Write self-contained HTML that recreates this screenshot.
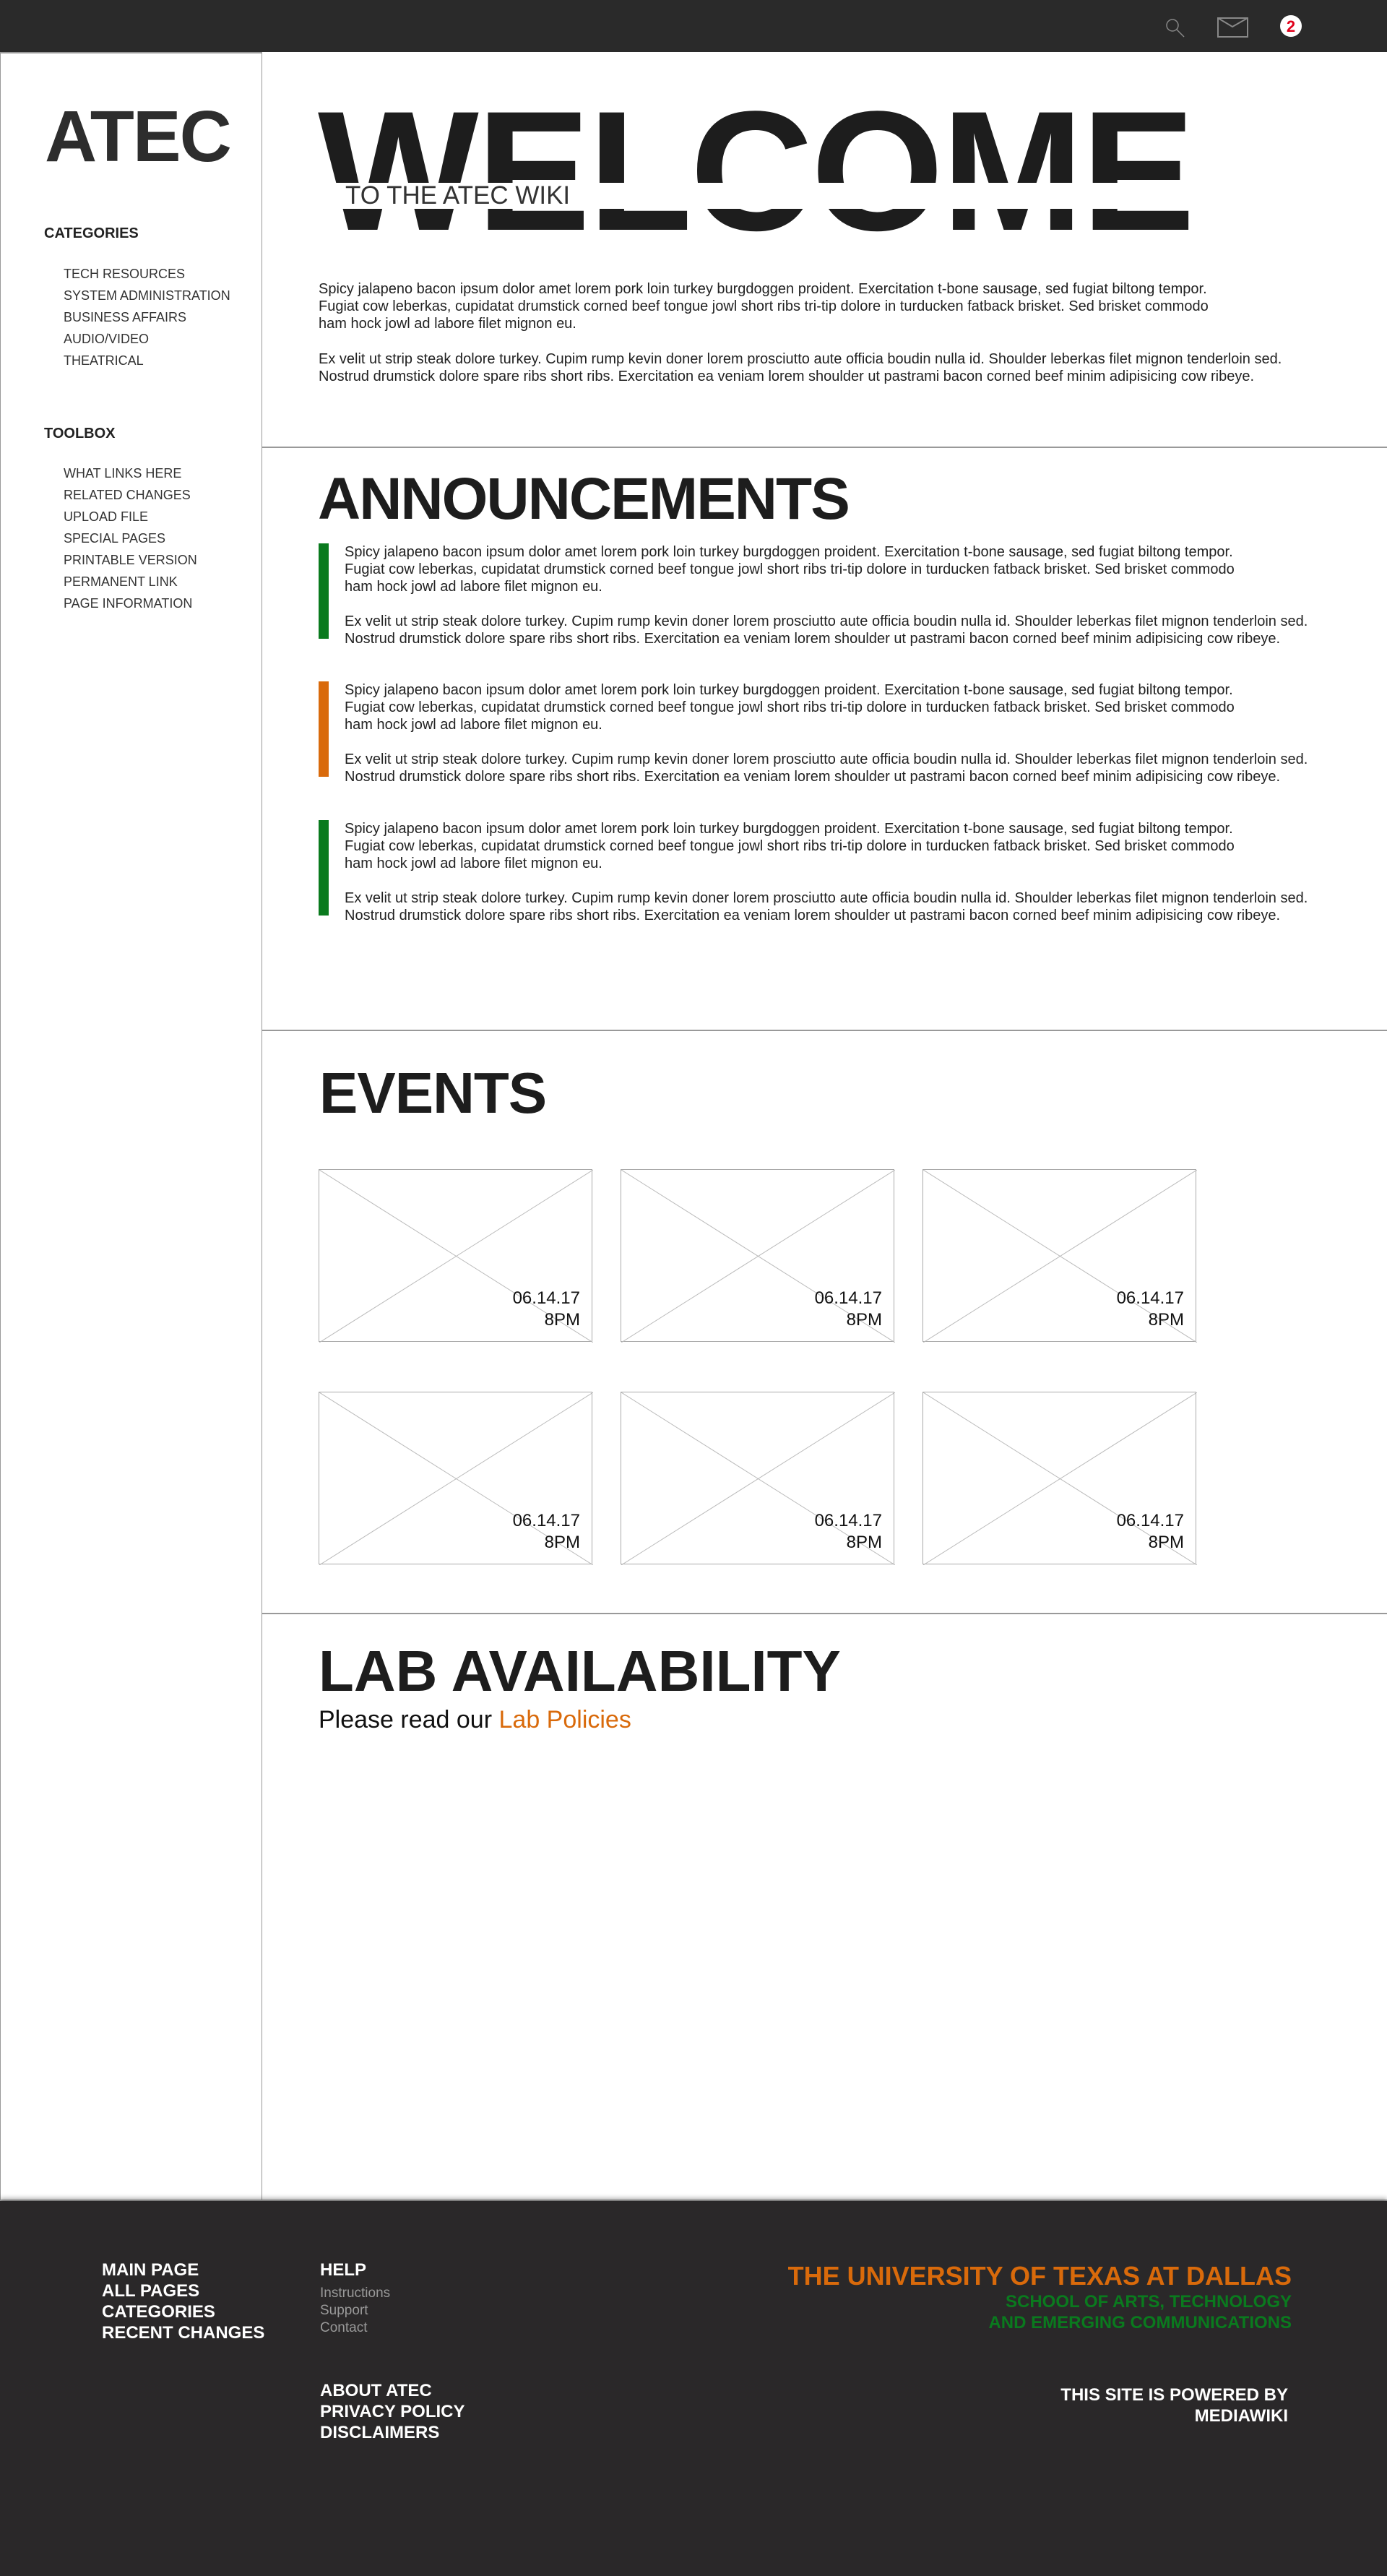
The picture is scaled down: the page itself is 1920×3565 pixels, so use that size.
<!DOCTYPE html>
<html><head><meta charset="utf-8"><style>
*{margin:0;padding:0;box-sizing:border-box}
body{width:1920px;height:3565px;position:relative;background:#fff;font-family:"Liberation Sans",Arial,sans-serif;color:#222;overflow:hidden}
.a{position:absolute;white-space:nowrap}
.hdr{left:0;top:0;width:1920px;height:72px;background:#2a2a2a}
.side{left:0;top:72px;width:363px;height:2973px;border:1px solid #999;border-top:2px solid #999}
.vl{left:362px;top:72px;width:1px;height:2973px;background:#999}
.hl{left:362px;width:1558px;height:2px;background:#999}
.cat{font-weight:bold;font-size:20px;color:#222;left:61px}
.li{font-size:18px;color:#333;left:88px;line-height:30px}
.p{font-size:20px;line-height:24px;color:#222}
.h{font-weight:bold;color:#1d1d1d;letter-spacing:-2px}
.bar{width:14px;height:132px;left:441px}
.box{width:379px;height:239px;border:1px solid #aaa}
.box svg{position:absolute;left:0;top:0}
.dt{position:absolute;right:16px;top:163px;text-align:right;font-size:24px;line-height:30px;color:#111}
.ft{left:0;top:3046px;width:1920px;height:519px;background:#2a2829;box-shadow:0 -4px 6px rgba(0,0,0,.3)}
.fb{font-weight:bold;color:#fff;font-size:24px;line-height:29px}
</style></head><body>
<div class="a hdr"></div>
<svg class="a" style="left:1600px;top:10px" width="220" height="52">
<circle cx="23" cy="25" r="8" fill="none" stroke="#888" stroke-width="1.5"/><line x1="29" y1="31" x2="39" y2="41" stroke="#888" stroke-width="1.5"/>
<rect x="86" y="15" width="41" height="26" fill="none" stroke="#888" stroke-width="2"/><polyline points="86,15 106,27 127,15" fill="none" stroke="#888" stroke-width="2"/>
<circle cx="187" cy="26" r="15" fill="#fff"/><text x="187" y="34" text-anchor="middle" font-family="Liberation Sans" font-weight="bold" font-size="22" fill="#e0001b">2</text>
</svg>
<div class="a side"></div>
<div class="a vl"></div>
<div class="a" style="left:62px;top:134px;font-size:100px;font-weight:bold;color:#2d2d2d;letter-spacing:-2px;line-height:110px">ATEC</div>
<div class="a cat" style="top:312px">CATEGORIES</div>
<div class="a li" style="top:364px">TECH RESOURCES<br>SYSTEM ADMINISTRATION<br>BUSINESS AFFAIRS<br>AUDIO/VIDEO<br>THEATRICAL</div>
<div class="a cat" style="top:589px">TOOLBOX</div>
<div class="a li" style="top:640px">WHAT LINKS HERE<br>RELATED CHANGES<br>UPLOAD FILE<br>SPECIAL PAGES<br>PRINTABLE VERSION<br>PERMANENT LINK<br>PAGE INFORMATION</div>

<div class="a h" style="left:440px;top:107px;font-size:236px;line-height:260px;letter-spacing:-3px;color:#1d1d1d">WELCOME</div>
<div class="a" style="left:443px;top:253px;width:1160px;height:36px;background:#fff"></div>
<div class="a" style="left:478px;top:251px;font-size:35px;color:#333;line-height:40px">TO THE ATEC WIKI</div>
<div class="a p" style="left:441px;top:388px">Spicy jalapeno bacon ipsum dolor amet lorem pork loin turkey burgdoggen proident. Exercitation t-bone sausage, sed fugiat biltong tempor.<br>Fugiat cow leberkas, cupidatat drumstick corned beef tongue jowl short ribs tri-tip dolore in turducken fatback brisket. Sed brisket commodo<br>ham hock jowl ad labore filet mignon eu.</div>
<div class="a p" style="left:441px;top:485px">Ex velit ut strip steak dolore turkey. Cupim rump kevin doner lorem prosciutto aute officia boudin nulla id. Shoulder leberkas filet mignon tenderloin sed.<br>Nostrud drumstick dolore spare ribs short ribs. Exercitation ea veniam lorem shoulder ut pastrami bacon corned beef minim adipisicing cow ribeye.</div>

<div class="a hl" style="top:618px"></div>
<div class="a h" style="left:440px;top:648px;font-size:82px;line-height:86px">ANNOUNCEMENTS</div>
<div class="a bar" style="top:752px;background:#0a7a1e"></div>
<div class="a bar" style="top:943px;background:#d96a0b"></div>
<div class="a bar" style="top:1135px;background:#0a7a1e"></div>
<div class="a p" style="left:477px;top:752px">Spicy jalapeno bacon ipsum dolor amet lorem pork loin turkey burgdoggen proident. Exercitation t-bone sausage, sed fugiat biltong tempor.<br>Fugiat cow leberkas, cupidatat drumstick corned beef tongue jowl short ribs tri-tip dolore in turducken fatback brisket. Sed brisket commodo<br>ham hock jowl ad labore filet mignon eu.</div>
<div class="a p" style="left:477px;top:848px">Ex velit ut strip steak dolore turkey. Cupim rump kevin doner lorem prosciutto aute officia boudin nulla id. Shoulder leberkas filet mignon tenderloin sed.<br>Nostrud drumstick dolore spare ribs short ribs. Exercitation ea veniam lorem shoulder ut pastrami bacon corned beef minim adipisicing cow ribeye.</div>
<div class="a p" style="left:477px;top:943px">Spicy jalapeno bacon ipsum dolor amet lorem pork loin turkey burgdoggen proident. Exercitation t-bone sausage, sed fugiat biltong tempor.<br>Fugiat cow leberkas, cupidatat drumstick corned beef tongue jowl short ribs tri-tip dolore in turducken fatback brisket. Sed brisket commodo<br>ham hock jowl ad labore filet mignon eu.</div>
<div class="a p" style="left:477px;top:1039px">Ex velit ut strip steak dolore turkey. Cupim rump kevin doner lorem prosciutto aute officia boudin nulla id. Shoulder leberkas filet mignon tenderloin sed.<br>Nostrud drumstick dolore spare ribs short ribs. Exercitation ea veniam lorem shoulder ut pastrami bacon corned beef minim adipisicing cow ribeye.</div>
<div class="a p" style="left:477px;top:1135px">Spicy jalapeno bacon ipsum dolor amet lorem pork loin turkey burgdoggen proident. Exercitation t-bone sausage, sed fugiat biltong tempor.<br>Fugiat cow leberkas, cupidatat drumstick corned beef tongue jowl short ribs tri-tip dolore in turducken fatback brisket. Sed brisket commodo<br>ham hock jowl ad labore filet mignon eu.</div>
<div class="a p" style="left:477px;top:1231px">Ex velit ut strip steak dolore turkey. Cupim rump kevin doner lorem prosciutto aute officia boudin nulla id. Shoulder leberkas filet mignon tenderloin sed.<br>Nostrud drumstick dolore spare ribs short ribs. Exercitation ea veniam lorem shoulder ut pastrami bacon corned beef minim adipisicing cow ribeye.</div>

<div class="a hl" style="top:1425px"></div>
<div class="a h" style="left:442px;top:1471px;font-size:80px;line-height:84px;letter-spacing:-1px">EVENTS</div>

<div class="a box" style="left:441px;top:1618px"><svg width="379" height="239"><line x1="0" y1="0" x2="379" y2="239" stroke="#bbb"/><line x1="379" y1="0" x2="0" y2="239" stroke="#bbb"/></svg><div class="dt">06.14.17<br>8PM</div></div>
<div class="a box" style="left:859px;top:1618px"><svg width="379" height="239"><line x1="0" y1="0" x2="379" y2="239" stroke="#bbb"/><line x1="379" y1="0" x2="0" y2="239" stroke="#bbb"/></svg><div class="dt">06.14.17<br>8PM</div></div>
<div class="a box" style="left:1277px;top:1618px"><svg width="379" height="239"><line x1="0" y1="0" x2="379" y2="239" stroke="#bbb"/><line x1="379" y1="0" x2="0" y2="239" stroke="#bbb"/></svg><div class="dt">06.14.17<br>8PM</div></div>
<div class="a box" style="left:441px;top:1926px"><svg width="379" height="239"><line x1="0" y1="0" x2="379" y2="239" stroke="#bbb"/><line x1="379" y1="0" x2="0" y2="239" stroke="#bbb"/></svg><div class="dt">06.14.17<br>8PM</div></div>
<div class="a box" style="left:859px;top:1926px"><svg width="379" height="239"><line x1="0" y1="0" x2="379" y2="239" stroke="#bbb"/><line x1="379" y1="0" x2="0" y2="239" stroke="#bbb"/></svg><div class="dt">06.14.17<br>8PM</div></div>
<div class="a box" style="left:1277px;top:1926px"><svg width="379" height="239"><line x1="0" y1="0" x2="379" y2="239" stroke="#bbb"/><line x1="379" y1="0" x2="0" y2="239" stroke="#bbb"/></svg><div class="dt">06.14.17<br>8PM</div></div>

<div class="a hl" style="top:2232px"></div>
<div class="a h" style="left:441px;top:2271px;font-size:80px;line-height:84px;letter-spacing:0">LAB AVAILABILITY</div>
<div class="a" style="left:441px;top:2360px;font-size:34px;line-height:40px;color:#111">Please read our <span style="color:#d96a0b">Lab Policies</span></div>
<div class="a" style="left:0;top:3044px;width:1920px;height:2px;background:#aaa"></div>

<div class="a ft"></div>
<div class="a fb" style="left:141px;top:3127px">MAIN PAGE<br>ALL PAGES<br>CATEGORIES<br>RECENT CHANGES</div>
<div class="a fb" style="left:443px;top:3127px">HELP</div>
<div class="a" style="left:443px;top:3162px;font-size:19px;line-height:24px;color:#999">Instructions<br>Support<br>Contact</div>
<div class="a fb" style="left:443px;top:3294px">ABOUT ATEC<br>PRIVACY POLICY<br>DISCLAIMERS</div>
<div class="a" style="right:132px;top:3128px;text-align:right;font-weight:bold;font-size:36px;line-height:44px;color:#d96a0b">THE UNIVERSITY OF TEXAS AT DALLAS</div>
<div class="a" style="right:132px;top:3171px;text-align:right;font-weight:bold;font-size:24px;line-height:29px;color:#0a7a1e">SCHOOL OF ARTS, TECHNOLOGY<br>AND EMERGING COMMUNICATIONS</div>
<div class="a fb" style="right:137px;top:3300px;text-align:right">THIS SITE IS POWERED BY<br>MEDIAWIKI</div>
</body></html>
